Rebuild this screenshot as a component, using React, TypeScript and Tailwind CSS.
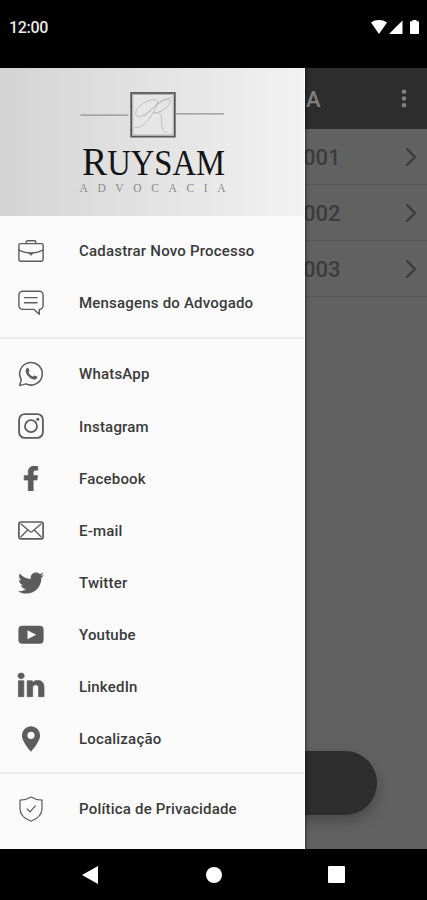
import type { ReactNode } from 'react';
import { FaFacebookF, FaLinkedinIn, FaTwitter } from 'react-icons/fa';

const stroke = {
  fill: 'none',
  stroke: 'currentColor',
  strokeWidth: 1.4,
  strokeLinejoin: 'round',
  strokeLinecap: 'round',
} as const;

function BriefcaseIcon() {
  return (
    <svg viewBox="0 0 26 26" className="w-[26px] h-[26px]" {...stroke}>
      <rect x="0.9" y="5.6" width="24.2" height="17.6" rx="1.6" />
      <path d="M8.2 5.6V4c0-.7.5-1.2 1.2-1.2h7.2c.7 0 1.2.5 1.2 1.2v1.6" />
      <path d="M1 12.2c3.5 1.8 7 2.6 10.4 2.8M25 12.2c-3.5 1.8-7 2.6-10.4 2.8" />
      <path d="M11.4 14.4h3.2v1.4L13 17.4l-1.6-1.6z" fill="currentColor" strokeWidth="0.6" />
    </svg>
  );
}

function MessageIcon() {
  return (
    <svg viewBox="0 0 26 26" className="w-[26px] h-[26px]" {...stroke}>
      <path d="M4.7 1.2h16.6a3.8 3.8 0 0 1 3.8 3.8v10.6a3.8 3.8 0 0 1-3.8 3.8v4.8l-5.3-4.8H4.7a3.8 3.8 0 0 1-3.8-3.8V5a3.8 3.8 0 0 1 3.8-3.8z" />
      <path d="M6.500 7.600h12.600M6.500 12.800h12.600" />
    </svg>
  );
}

function WhatsappIcon() {
  return (
    <svg viewBox="0 0 26 26" className="w-[26px] h-[26px]" {...stroke}>
      <path d="M1.6 24.6l1.7-6A11.3 11.3 0 1 1 8 22.9z" strokeWidth="1.5" />
      <path
        d="M8.9 7.1c.5-.5 1.2-.4 1.5.2l1 2.3c.2.5-.9 1.4-.8 1.8.8 1.8 2.2 3.2 4.1 4.1.4.2 1.4-1.3 1.9-1.1l2.3 1.2c.6.3.5 1.2.1 1.7-1.1 1.3-2.8 1.5-4.3.9-3.1-1.2-5.7-3.7-6.8-6.8-.5-1.5-.2-3.2 1-4.3z"
        fill="currentColor"
        stroke="none"
      />
    </svg>
  );
}

function InstagramIcon() {
  return (
    <svg viewBox="0 0 26 26" className="w-[26px] h-[26px]" {...stroke}>
      <rect x="1.1" y="1.1" width="23.8" height="23.8" rx="5.6" strokeWidth="1.8" />
      <circle cx="13" cy="13.2" r="6" strokeWidth="1.8" />
      <circle cx="19.8" cy="6.2" r="1.5" fill="currentColor" stroke="none" />
    </svg>
  );
}

function MailIcon() {
  return (
    <svg viewBox="0 0 26 26" className="w-[26px] h-[26px]" {...stroke}>
      <rect x="0.9" y="4" width="24.2" height="16.8" rx="2" strokeWidth="1.7" />
      <path d="M3 6l8.8 7.6c.7.6 1.7.6 2.4 0L23 6M3 18.8l6.6-6.8M23 18.8l-6.6-6.8" strokeWidth="1.3" />
    </svg>
  );
}

function YoutubeIcon() {
  return (
    <svg viewBox="0 0 26 26" className="w-[26px] h-[26px]">
      <rect x="0.4" y="3.8" width="25.2" height="18" rx="4" fill="currentColor" />
      <path d="M9.500 8.300v9l8.700-4.500z" fill="#fafafa" />
    </svg>
  );
}

function PinIcon() {
  return (
    <svg viewBox="0 0 26 26" className="w-[26px] h-[26px]">
      <path
        d="M13 .3a9.1 9.1 0 0 0-9.1 9.1C3.9 15.5 13 25.7 13 25.7s9.1-10.2 9.1-16.3A9.1 9.1 0 0 0 13 .3zm0 5.4a3.6 3.6 0 1 1 0 7.2 3.6 3.6 0 0 1 0-7.2z"
        fill="currentColor"
        fillRule="evenodd"
      />
    </svg>
  );
}

function ShieldIcon() {
  return (
    <svg viewBox="0 0 26 26" className="w-[26px] h-[26px]" {...stroke} strokeWidth="1.2">
      <path d="M13 1c3.3 2.1 7 3 11 3.2v8.3c0 6-4.500 10.300-11 12.700C6.500 22.800 2 18.500 2 12.500V4.200C6 4 9.700 3.100 13 1z" />
      <path d="M9.200 13l2.800 2.900 5.300-6" />
    </svg>
  );
}

type Item = { label: string; icon: ReactNode };

const sections: Item[][] = [
  [
    { label: 'Cadastrar Novo Processo', icon: <BriefcaseIcon /> },
    { label: 'Mensagens do Advogado', icon: <MessageIcon /> },
  ],
  [
    { label: 'WhatsApp', icon: <WhatsappIcon /> },
    { label: 'Instagram', icon: <InstagramIcon /> },
    {
      label: 'Facebook',
      icon: <FaFacebookF preserveAspectRatio="none" strokeWidth={12} className="w-[16px] h-[25px] shrink-0 stroke-current" />,
    },
    { label: 'E-mail', icon: <MailIcon /> },
    { label: 'Twitter', icon: <FaTwitter className="w-[26px] h-[26px] shrink-0" /> },
    { label: 'Youtube', icon: <YoutubeIcon /> },
    {
      label: 'LinkedIn',
      icon: <FaLinkedinIn preserveAspectRatio="none" strokeWidth={14} className="w-[26px] h-[27px] shrink-0 stroke-current overflow-visible" />,
    },
    { label: 'Localização', icon: <PinIcon /> },
  ],
  [{ label: 'Política de Privacidade', icon: <ShieldIcon /> }],
];

function Logo() {
  return (
    <svg viewBox="0 0 150 106" className="w-[150px] h-[106px] overflow-visible">
      <path d="M2.500 25.200h48M98 23.900h48" stroke="#929292" strokeWidth="1.3" />
      <rect x="53.2" y="3" width="43.6" height="43.6" fill="#e6e6e6" stroke="#575757" strokeWidth="1.8" />
      <rect x="54.8" y="4.6" width="40.4" height="40.4" fill="none" stroke="#a5a5a5" strokeWidth="0.8" />
      <path
        d="M56.5 37c5 2 11-3 16-10 5-8 9-15 6-17-5-2-16 3-20 10-2 5 0 8 5 6 10-3 14-13 21-16 6-2 10 0 7 4-3 5-11 9-16 9 6-1 8 1 8 6 0 8 1 15 6 13M66 27c7-9 17-16 28-20"
        fill="none"
        stroke="#b4b4b4"
        strokeWidth="0.8"
      />
      <text x="4" y="85" textLength="143" lengthAdjust="spacingAndGlyphs" fill="#141414" fontFamily="Liberation Serif, serif">
        <tspan fontSize="40.5">R</tspan>
        <tspan fontSize="35">UYSAM</tspan>
      </text>
      <text x="1.5" y="102" textLength="146" fill="#8a8a8a" fontSize="11.5" fontFamily="Liberation Serif, serif">
        ADVOCACIA
      </text>
    </svg>
  );
}

function Drawer() {
  return (
    <aside className="absolute left-0 top-0 w-[305px] h-full bg-[#fafafa] border-r border-white shadow-[1px_0_3px_rgba(0,0,0,0.5)]">
      <div className="h-[148px] pl-[78px] pt-[22px] bg-gradient-to-r from-[#d4d4d4] to-[#f2f2f2]">
        <Logo />
      </div>
      {sections.map((items, i) => (
        <ul key={i} className={i === 0 ? 'pt-[9px] pb-2' : 'pt-[9px] pb-[7px] border-t-2 border-[#ebebeb]'}>
          {items.map((item) => (
            <li key={item.label} className="flex items-center h-[52.1px] pl-[18px]">
              <span className="flex w-[26px] justify-center text-[#5c5c5c]">{item.icon}</span>
              <span className="ml-[35px] pt-px text-[15px] font-medium text-[#3a3a3a] whitespace-nowrap tracking-[0.2px]">
                {item.label}
              </span>
            </li>
          ))}
        </ul>
      ))}
    </aside>
  );
}

function ProcessList() {
  return (
    <main className="h-full bg-[#616161]">
      <header className="flex items-center justify-between h-[61px] pl-[306px] pr-[19px] pt-[2px] bg-[#2d2d2d] text-[#808080]">
        <h1 className="text-[22px] font-medium">A</h1>
        <svg viewBox="0 0 8 20" className="w-2 h-5 mb-[2px]" fill="currentColor">
          <circle cx="4" cy="2.8" r="2.3" />
          <circle cx="4" cy="9.5" r="2.3" />
          <circle cx="4" cy="16.2" r="2.3" />
        </svg>
      </header>
      <ul>
        {['001', '002', '003'].map((num) => (
          <li
            key={num}
            className="flex items-center justify-between h-[56px] pl-[303px] pr-[10px] border-b border-[#545454] text-[#3c3c3c]"
          >
            <span className="pt-px text-[22px] font-medium">{num}</span>
            <svg viewBox="0 0 12 20" className="w-3 h-5" fill="none" stroke="currentColor" strokeWidth="2.3">
              <path d="M1.500 1.500L10 10l-8.500 8.500" />
            </svg>
          </li>
        ))}
      </ul>
      <button className="absolute bottom-[34px] right-[50px] w-[327px] h-[64px] rounded-full bg-[#2d2d2d] shadow-[0_6px_14px_rgba(0,0,0,0.25)]" />
    </main>
  );
}

export default function App() {
  return (
    <div className="flex flex-col w-[427px] h-[900px] overflow-hidden bg-black font-[Roboto,sans-serif]">
      <div className="flex items-start justify-between h-[68px] pl-[9px] pr-[7px] pt-[19px] text-white">
        <span className="text-[16px] leading-[18px] font-medium text-[#e8e8e8] tracking-[-0.3px]">12:00</span>
        <svg viewBox="0 0 50 16" className="w-[50px] h-4" fill="currentColor">
          <path d="M1 3.500C5.500.2 12.500.2 17 3.500L9 15z" />
          <path d="M32.500 1.500V15H19z" />
          <path d="M42.500 1h4v1.200H48c.6 0 1 .4 1 1V14c0 .6-.4 1-1 1h-7c-.6 0-1-.4-1-1V3.200c0-.6.4-1 1-1h1.500z" />
        </svg>
      </div>
      <div className="relative h-[781px] overflow-hidden">
        <ProcessList />
        <Drawer />
      </div>
      <nav className="flex items-center justify-between h-[51px] pl-[81px] pr-[82px] text-white">
        <svg viewBox="0 0 18 20" className="w-[18px] h-5" fill="currentColor">
          <path d="M17 1v18L1 10z" />
        </svg>
        <span className="w-4 h-4 rounded-full bg-white" />
        <span className="w-[17px] h-[17px] rounded-[1px] bg-white" />
      </nav>
    </div>
  );
}
